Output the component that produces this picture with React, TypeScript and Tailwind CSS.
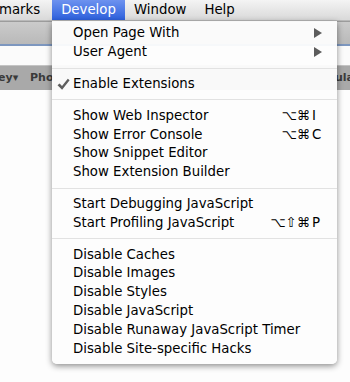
import React from 'react';

type Item =
  | { kind: 'sep' }
  | { kind: 'item'; label: string; mods?: string; keyChar?: string; submenu?: boolean; checked?: boolean };

const items: Item[] = [
  { kind: 'item', label: 'Open Page With', submenu: true },
  { kind: 'item', label: 'User Agent', submenu: true },
  { kind: 'sep' },
  { kind: 'item', label: 'Enable Extensions', checked: true },
  { kind: 'sep' },
  { kind: 'item', label: 'Show Web Inspector', mods: '⌥⌘', keyChar: 'I' },
  { kind: 'item', label: 'Show Error Console', mods: '⌥⌘', keyChar: 'C' },
  { kind: 'item', label: 'Show Snippet Editor' },
  { kind: 'item', label: 'Show Extension Builder' },
  { kind: 'sep' },
  { kind: 'item', label: 'Start Debugging JavaScript' },
  { kind: 'item', label: 'Start Profiling JavaScript', mods: '⌥⇧⌘', keyChar: 'P' },
  { kind: 'sep' },
  { kind: 'item', label: 'Disable Caches' },
  { kind: 'item', label: 'Disable Images' },
  { kind: 'item', label: 'Disable Styles' },
  { kind: 'item', label: 'Disable JavaScript' },
  { kind: 'item', label: 'Disable Runaway JavaScript Timer' },
  { kind: 'item', label: 'Disable Site-specific Hacks' },
];

const font = { fontFamily: '"DejaVu Sans", "Noto Sans", sans-serif' };

const MenuRow: React.FC<{ item: Item }> = ({ item }) => {
  if (item.kind === 'sep') {
    return (
      <div className="flex h-[13px] items-center">
        <div className="h-px w-full bg-[#e2e2e2]" />
      </div>
    );
  }
  return (
    <div className="relative flex h-[18.8px] items-center pl-[21px] text-[13.3px] text-black">
      {item.checked && (
        // heavy check mark
        <svg className="absolute left-[5px] top-[3px]" width="13" height="13" viewBox="0 0 13 13">
          <path d="M0.5 7.2 L2.6 5.4 L5 8 L10.8 0.8 L12.6 2.3 L5.1 11.8 Z" fill="#5e5e5e" />
        </svg>
      )}
      <span>{item.label}</span>
      {item.mods && (
        <span className="ml-auto flex pr-[13px]">
          <span className="text-right">{item.mods}</span>
          <span className="w-[14px] pl-[2px]">{item.keyChar}</span>
        </span>
      )}
      {item.submenu && (
        <svg className="ml-auto mr-[15px]" width="8" height="10" viewBox="0 0 8 10">
          <path d="M0 0 L8 5 L0 10 Z" fill="#5c5c5c" />
        </svg>
      )}
    </div>
  );
};

export default function App() {
  return (
    <div className="relative h-[382px] w-[350px] overflow-hidden bg-[#fdfdfd]" style={font}>
      {/* menu bar */}
      <div className="flex h-[21px] items-center border-b border-[#b9b9b9] bg-gradient-to-b from-[#f4f4f4] to-[#d9d9d9] text-[13.3px] text-black">
        <span className="-ml-px w-[53px]">marks</span>
        <span className="flex h-full w-[73px] items-center justify-center bg-gradient-to-b from-[#6d92ef] to-[#2c5fdc] text-white">
          Develop
        </span>
        <span className="ml-[9px]">Window</span>
        <span className="ml-[18px]">Help</span>
      </div>

      {/* toolbar behind */}
      <div className="h-[23px] border-t border-[#9c9c9c] bg-gradient-to-b from-[#cbcbcb] to-[#b9b9b9]" />
      <div className="h-[2px] bg-[#7d97bf]" />
      <div className="h-[19px] bg-[#fbfbfb]" />
      <div className="flex h-[25px] items-center justify-between border-t border-[#c4c4c4] bg-[#a9a9a9] text-[11px] font-bold text-[#3a3a3a]">
        <span className="-ml-[2px]">ey▾ <span className="ml-[8px]">Pho</span></span>
        <span className="mr-[-4px]">ula</span>
      </div>

      {/* dropdown */}
      <div className="absolute left-[52px] top-[21px] w-[285px] rounded-b-[5px] bg-[#fdfdfd]/95 pb-[6px] pt-[3px] shadow-[0_2px_6px_rgba(0,0,0,0.45)]">
        {items.map((item, i) => (
          <MenuRow key={i} item={item} />
        ))}
      </div>
    </div>
  );
}
